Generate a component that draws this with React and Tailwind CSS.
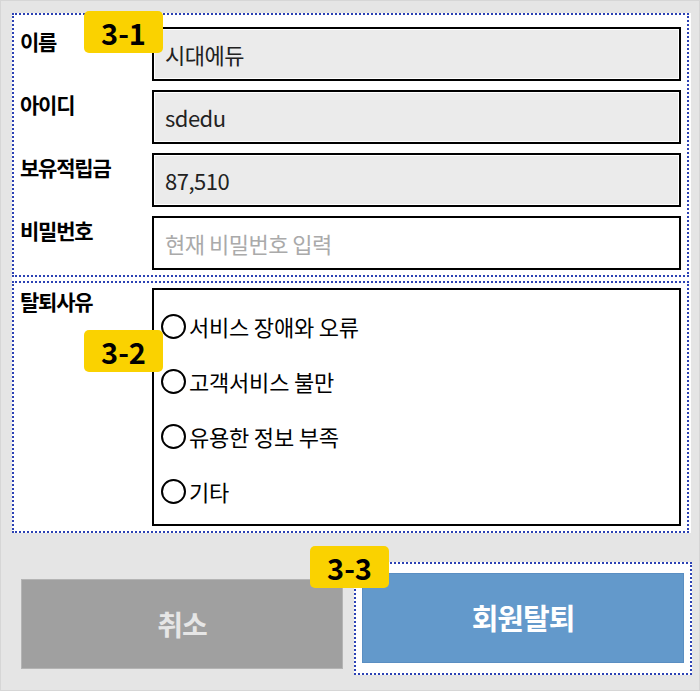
import React from "react";

const font = { fontFamily: '"Noto Sans CJK KR", "Noto Sans", sans-serif' };

function Badge({ label, className }) {
  return (
    <div
      className={`absolute flex items-center justify-center w-[79px] h-[42px] rounded-[5px] bg-[#fad200] text-[29px] font-bold text-black leading-none ${className}`}
    >
      {label}
    </div>
  );
}

function Field({ label, value, placeholder, readOnly }) {
  return (
    <div className="flex h-[54px]">
      <div className="w-[138px] pl-[6px] text-[21px] font-bold tracking-[-1.2px] text-black leading-[28px]">
        {label}
      </div>
      <div
        className={`flex-1 flex items-center pl-[11px] border-2 border-black text-[22px] tracking-[-0.5px] ${
          readOnly ? "bg-[#ebebeb] shadow-[inset_0_0_0_1px_#fff] text-[#222]" : "bg-white text-[#aaaaaa]"
        }`}
      >
        {value || placeholder}
      </div>
    </div>
  );
}

const reasons = ["서비스 장애와 오류", "고객서비스 불만", "유용한 정보 부족", "기타"];

export default function App() {
  return (
    <div className="relative w-[700px] h-[691px] bg-[#e5e5e5] border border-[#d6d6d6] overflow-hidden" style={font}>
      {/* form panel */}
      <div className="ml-[11px] mt-[12px] w-[679px] bg-white">
        <div className="w-[677px] h-[264px] border-2 border-dotted border-[#2c42b4] pt-[12px] pr-[6px] flex flex-col gap-[9px]">
          <Field label="이름" value="시대에듀" readOnly />
          <Field label="아이디" value="sdedu" readOnly />
          <Field label="보유적립금" value="87,510" readOnly />
          <Field label="비밀번호" placeholder="현재 비밀번호 입력" />
        </div>
        <div className="mt-[4px] w-[677px] h-[252px] border-2 border-dotted border-[#2c42b4] pt-[4px] pr-[6px] flex">
          <div className="w-[138px] pl-[6px] text-[21px] font-bold tracking-[-1.2px] text-black leading-[28px]">
            탈퇴사유
          </div>
          <div className="flex-1 h-[238px] mt-[1px] border-2 border-black pt-[9px] pl-[7px]">
            {reasons.map((r) => (
              <div key={r} className="flex items-center h-[55px] gap-[3px]">
                <span className="w-[25px] h-[25px] rounded-full border-2 border-black" />
                <span className="text-[22px] tracking-[-0.2px] text-black">{r}</span>
              </div>
            ))}
          </div>
        </div>
      </div>

      {/* buttons */}
      <div className="flex items-start">
        <button className="ml-[20px] mt-[46px] w-[322px] h-[90px] bg-[#a0a0a0] border border-[#b4b4b4] text-[#e6e6e6] text-[28px] font-bold tracking-[-1px]">
          취소
        </button>
        <div className="ml-[11px] mt-[29px] border-2 border-dotted border-[#2c42b4] bg-white pt-[9px] pl-[6px] pr-[6px] pb-[10px]">
          <button className="w-[322px] h-[90px] bg-[#6399cb] border border-[#5a8ec2] text-white text-[29px] font-bold tracking-[-1px]">
            회원탈퇴
          </button>
        </div>
      </div>

      <Badge label="3-1" className="left-[83px] top-[10px]" />
      <Badge label="3-2" className="left-[83px] top-[329px]" />
      <Badge label="3-3" className="left-[309px] top-[545px]" />
    </div>
  );
}
